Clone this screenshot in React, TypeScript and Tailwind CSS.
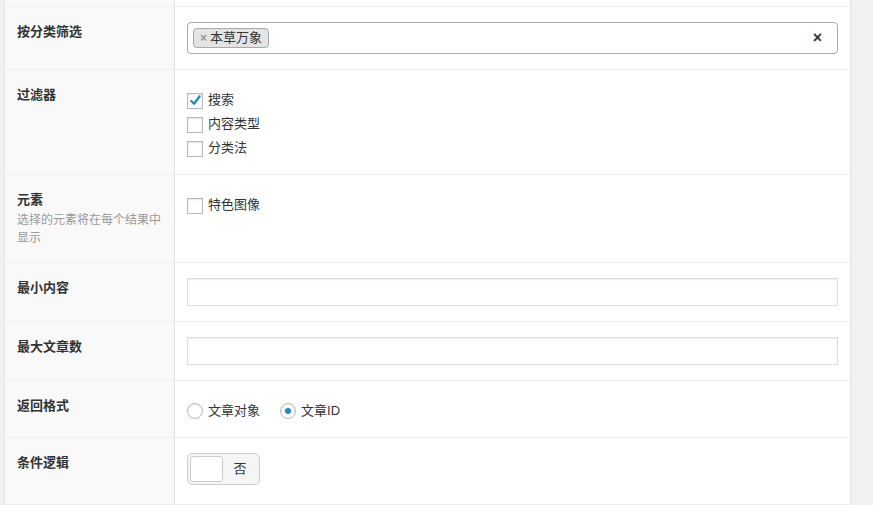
import type { ReactNode } from 'react';

const font = { fontFamily: '"Liberation Sans", "Noto Sans CJK SC", sans-serif' };

function Row({ label, desc, children, valueClass = 'pt-[15px] pb-[15px]' }: { label: string; desc?: string; children: ReactNode; valueClass?: string }) {
  return (
    <div className="flex border-t border-[#eeeeee]">
      <div className="w-[170px] shrink-0 bg-[#f9f9f9] border-r border-[#e1e1e1] px-[12px] py-[15px]">
        <div className="text-[13px] leading-[20px] font-bold text-[#333]">{label}</div>
        {desc && <p className="mt-[1px] text-[12px] leading-[18px] text-[#999]">{desc}</p>}
      </div>
      <div className={`flex-1 px-[12px] ${valueClass}`}>{children}</div>
    </div>
  );
}

function Checkbox({ label, checked }: { label: string; checked?: boolean }) {
  return (
    <label className="flex items-center h-6 gap-[5px] text-[13px] text-[#333]">
      <span className="relative w-4 h-4 border border-[#b4b9be] bg-white shadow-[inset_0_1px_2px_rgba(0,0,0,0.1)] mt-[1px]">
        {checked && (
          <svg viewBox="0 0 16 16" className="absolute left-0 -top-[1px] w-[15px] h-[15px]">
            <path d="M3.5 8.5 L6.5 11.5 L12.5 3.5" fill="none" stroke="#1e8cbe" strokeWidth="2.4" strokeLinecap="round" strokeLinejoin="round" />
          </svg>
        )}
      </span>
      <span>{label}</span>
    </label>
  );
}

function Radio({ label, checked }: { label: string; checked?: boolean }) {
  return (
    <label className="flex items-center h-6 gap-[5px] text-[13px] text-[#333]">
      <span className="flex items-center justify-center w-4 h-4 rounded-full border border-[#b4b9be] bg-white shadow-[inset_0_1px_2px_rgba(0,0,0,0.1)]">
        {checked && <span className="w-[6px] h-[6px] rounded-full bg-[#1e8cbe]" />}
      </span>
      <span>{label}</span>
    </label>
  );
}

function TextInput() {
  return <div className="h-[28px] border border-[#dddddd] bg-white shadow-[inset_0_1px_2px_rgba(0,0,0,0.07)]" />;
}

export default function App() {
  return (
    <div className="min-h-screen bg-[#f1f1f1] pl-[4px] pr-[22px]" style={font}>
      <div className="bg-white border-l border-r border-[#e5e5e5]">
        {/* tail of the row above */}
        <div className="flex h-[6px]">
          <div className="w-[170px] bg-[#f9f9f9] border-r border-[#e1e1e1]" />
          <div className="flex-1" />
        </div>

        <Row label="按分类筛选">
          <div className="flex items-center h-[32px] border border-[#aaaaaa] rounded-[4px] bg-white pl-[5px] pr-[15px]">
            <span className="flex items-center h-[20px] gap-[3px] border border-[#aaaaaa] rounded-[4px] bg-[#e4e4e4] pl-[6px] pr-[6px] text-[13px] text-[#333]">
              <span className="text-[#999] font-bold text-[12px]">×</span>
              <span>本草万象</span>
            </span>
            <span className="ml-auto text-[16px] font-bold text-[#333] leading-none">×</span>
          </div>
        </Row>

        <Row label="过滤器" valueClass="pt-[15px] pb-[14px]">
          <div className="mt-[3px]">
            <Checkbox label="搜索" checked />
            <Checkbox label="内容类型" />
            <Checkbox label="分类法" />
          </div>
        </Row>

        <Row label="元素" desc="选择的元素将在每个结果中显示">
          <div className="mt-[3px]">
            <Checkbox label="特色图像" />
          </div>
        </Row>

        <Row label="最小内容">
          <TextInput />
        </Row>

        <Row label="最大文章数">
          <TextInput />
        </Row>

        <Row label="返回格式" valueClass="pt-[15px] pb-[14px]">
          <div className="mt-[3px] flex gap-[20px]">
            <Radio label="文章对象" />
            <Radio label="文章ID" checked />
          </div>
        </Row>

        <Row label="条件逻辑">
          <div className="inline-flex items-center h-[32px] p-[2px] border border-[#cccccc] rounded-[5px] bg-[#f5f5f5]">
            <span className="w-[33px] h-[26px] border border-[#cccccc] rounded-[3px] bg-white" />
            <span className="w-[34px] text-center text-[13px] text-[#333]">否</span>
          </div>
        </Row>

        <div className="flex h-[2px] border-t border-[#eeeeee]">
          <div className="w-[170px] bg-[#f9f9f9] border-r border-[#e1e1e1]" />
          <div className="flex-1" />
        </div>
      </div>
      <div className="border-t border-[#e5e5e5]" />
    </div>
  );
}
